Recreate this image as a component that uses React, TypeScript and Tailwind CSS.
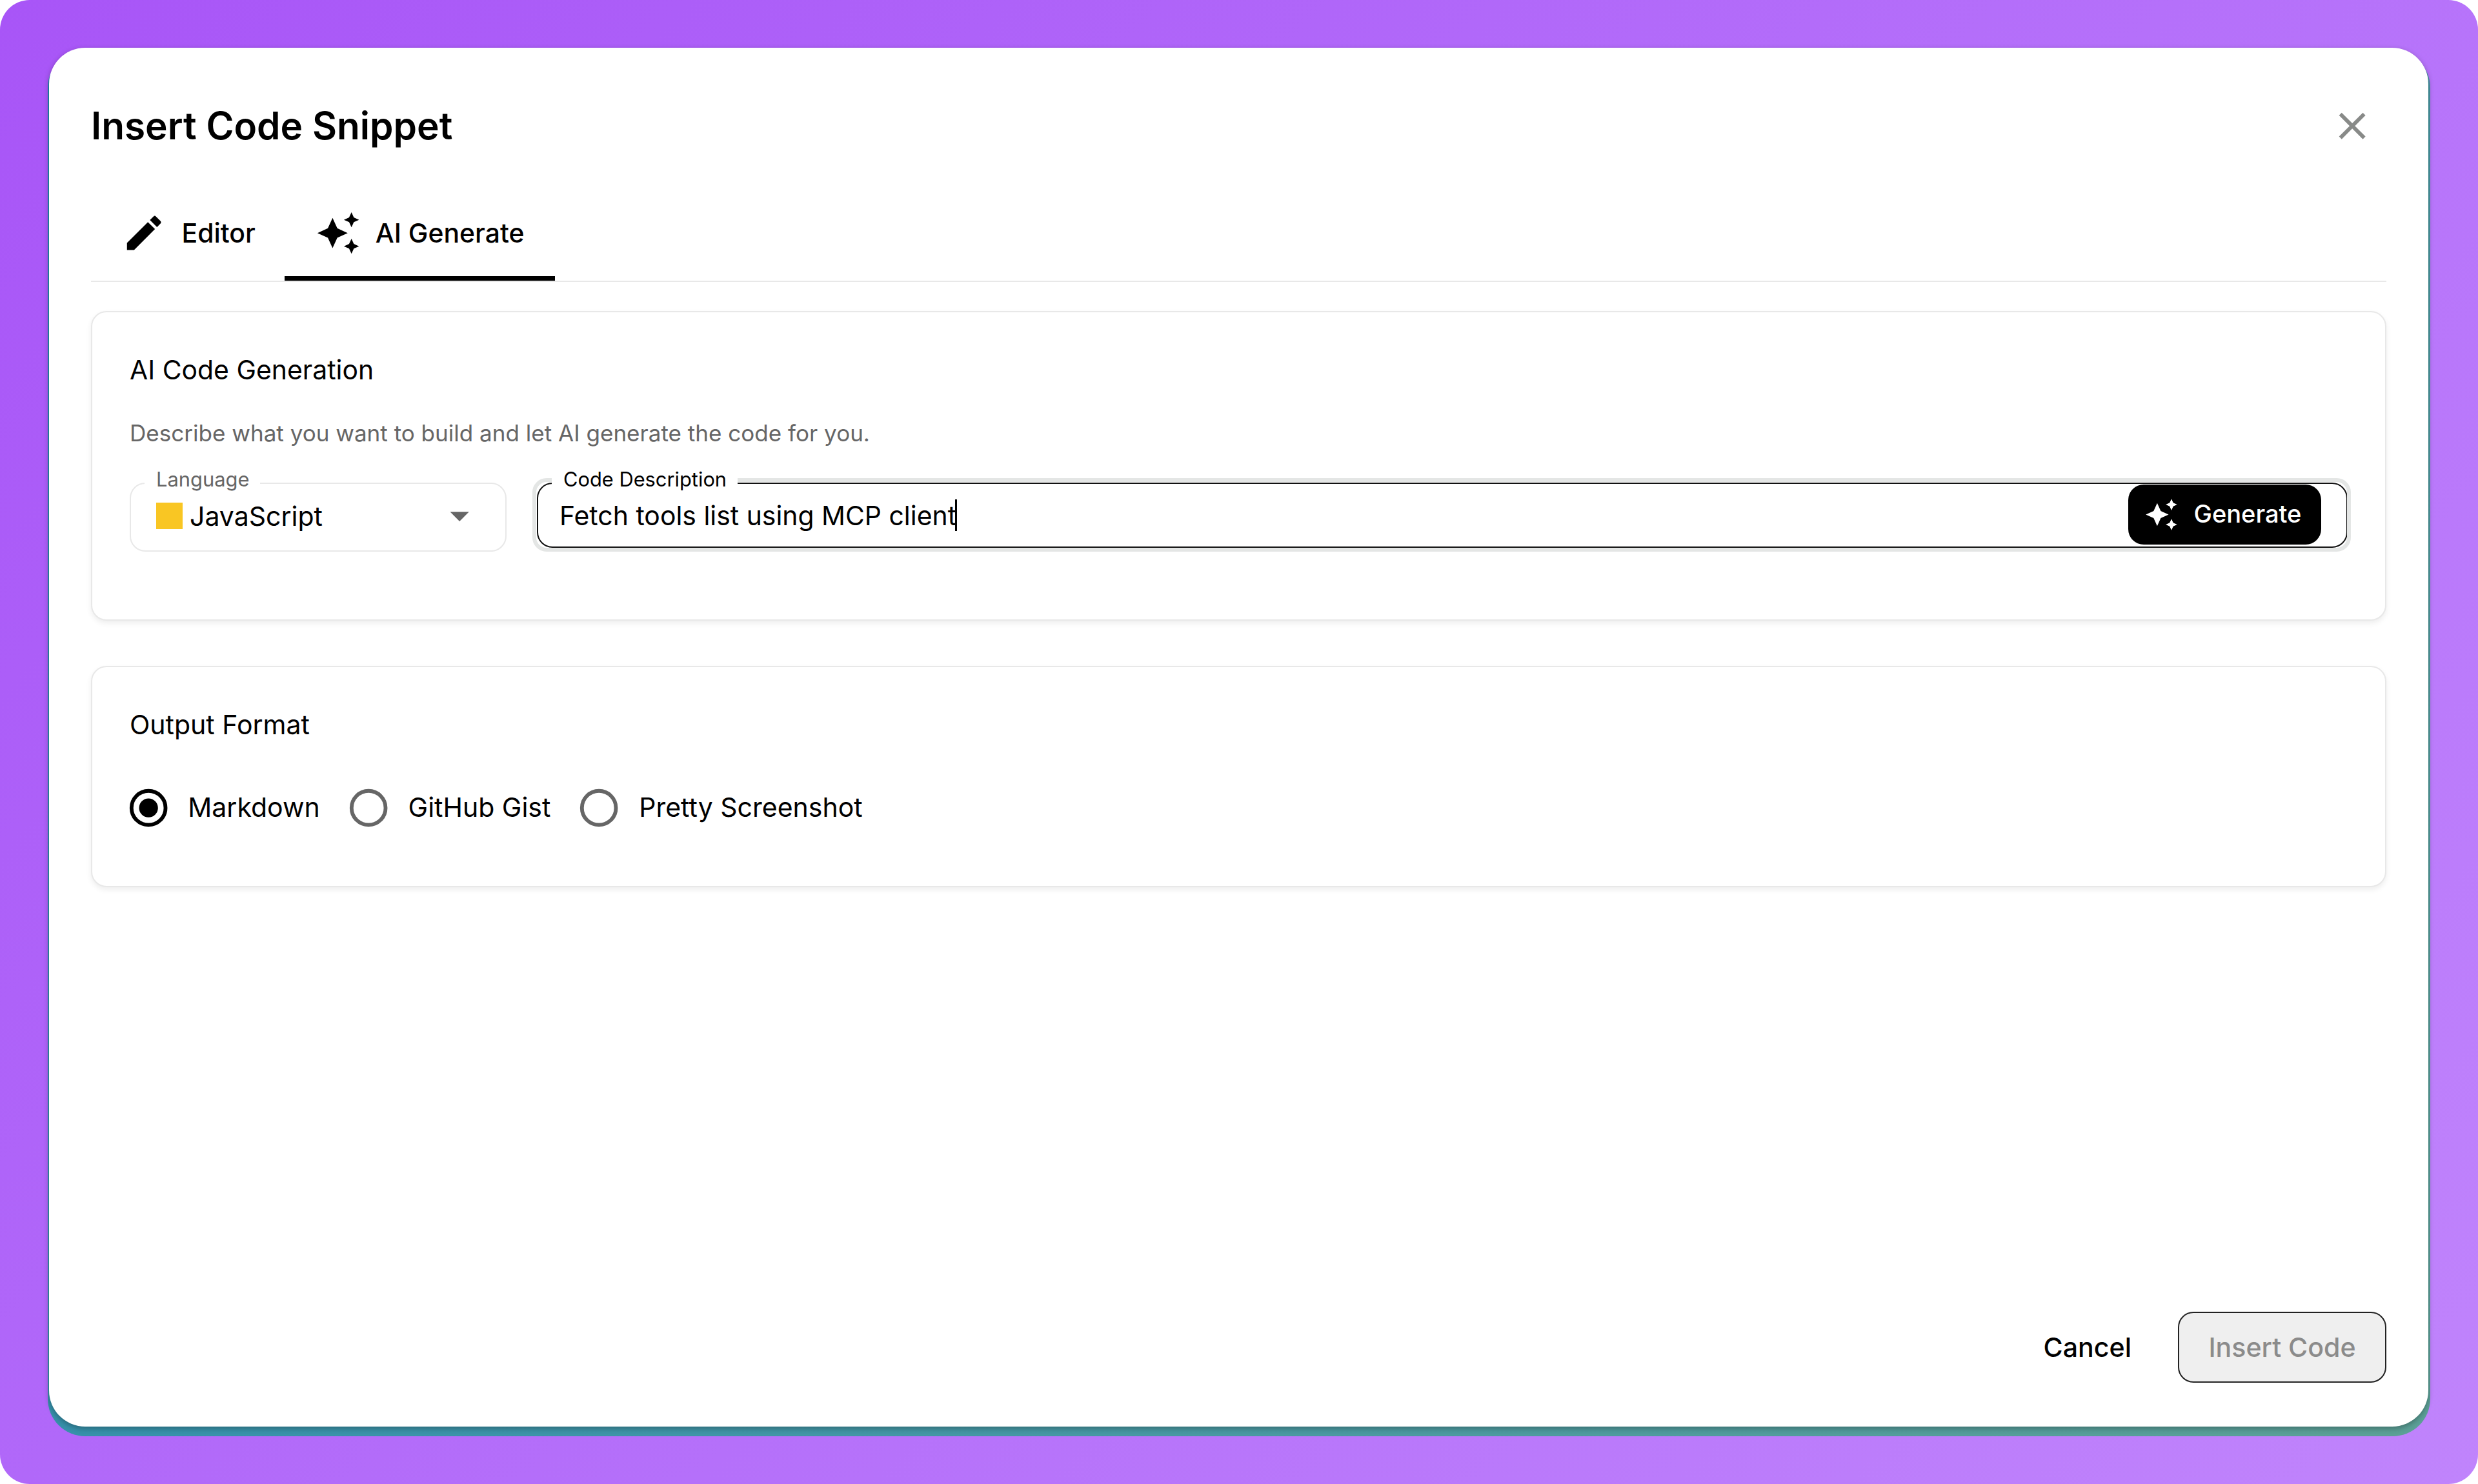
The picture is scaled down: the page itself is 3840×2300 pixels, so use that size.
import type { ReactNode } from "react";

const PATHS = {
  edit: "M3 17.25V21h3.75L17.81 9.94l-3.75-3.75zM20.71 7.04c.39-.39.39-1.02 0-1.41l-2.34-2.34a.996.996 0 0 0-1.41 0l-1.83 1.83 3.75 3.75z",
  sparkle:
    "m19 9 1.25-2.75L23 5l-2.75-1.25L19 1l-1.25 2.75L15 5l2.75 1.25zm-7.5.5L9 4 6.5 9.5 1 12l5.5 2.5L9 20l2.5-5.5L17 12zM19 15l-1.25 2.75L15 19l2.75 1.25L19 23l1.25-2.75L23 19l-2.75-1.25z",
  close:
    "M19 6.41 17.59 5 12 10.59 6.41 5 5 6.41 10.59 12 5 17.59 6.41 19 12 13.41 17.59 19 19 17.59 13.41 12z",
  arrowDown: "m7 10 5 5 5-5z",
};

function Icon({ name, className }: { name: keyof typeof PATHS; className: string }) {
  return (
    <svg viewBox="0 0 24 24" fill="currentColor" className={`shrink-0 ${className}`}>
      <path d={PATHS[name]} />
    </svg>
  );
}

function Card({ className, children }: { className: string; children: ReactNode }) {
  return (
    <section
      className={`rounded-[24px] border-2 border-[#e8e8e8] bg-white pr-[58.5px] pl-[58px] shadow-[0_4px_9px_rgba(0,0,0,0.07)] ${className}`}
    >
      {children}
    </section>
  );
}

function Radio({ label, checked }: { label: string; checked?: boolean }) {
  return (
    <label className="flex items-center">
      <svg
        viewBox="0 0 24 24"
        className={`size-[70.3px] shrink-0 ${checked ? "text-black" : "text-[#666666]"}`}
      >
        <circle cx="12" cy="12" r="9" fill="none" stroke="currentColor" strokeWidth="2" />
        {checked && <circle cx="12" cy="12" r="5" fill="currentColor" />}
      </svg>
      <span className="mb-[2px] ml-[26.5px] text-[41px] leading-[62px]">{label}</span>
    </label>
  );
}

export default function App() {
  return (
    <div className="h-[2300px] w-[3840px] bg-white font-[Inter,sans-serif] text-black">
      <div className="h-full rounded-[46px] bg-linear-135 from-[#a855f7] to-[#c084fc] pt-[78px] pr-[74px] pl-[74px]">
        <div className="flow-root h-[2148px] rounded-[58px] bg-linear-135 from-[#1f88b2] via-[#3d94a8] to-[#5ca096] pr-[3px] pl-[2px]">
          <main className="-mt-[4px] flex h-[2137px] flex-col rounded-[56px] bg-white px-[65px] shadow-[0_3px_8px_rgba(0,0,0,0.3)]">
            <header className="flex h-[213px] items-center justify-between pt-[29px] pr-[18px]">
              <h1 className="text-[58.5px] leading-[88px] font-semibold">Insert Code Snippet</h1>
              <button className="text-[#888a88]">
                <Icon name="close" className="size-[70.3px]" />
              </button>
            </header>

            <nav className="flex h-[150px] shrink-0 border-b-2 border-[#e8e8e8] text-[40.9px] font-medium">
              <button className="flex w-[300px] items-center justify-center gap-[23px] pt-[1px] pl-[2px]">
                <Icon name="edit" className="size-[70.3px]" />
                Editor
              </button>
              <button className="relative flex w-[419px] items-center justify-center gap-[23px] pt-[1px]">
                <Icon name="sparkle" className="size-[70.3px]" />
                AI Generate
                <span className="absolute inset-x-0 bottom-0 h-[7px] bg-black" />
              </button>
            </nav>

            <Card className="mt-[45px] h-[480px] pt-[58px]">
              <h2 className="text-[40.9px] leading-[62px]">AI Code Generation</h2>
              <p className="mt-[41px] text-[35.06px] leading-[52px] text-[#666666]">
                Describe what you want to build and let AI generate the code for you.
              </p>
              <div className="mt-[51px] flex items-start gap-[47px]">
                <div className="relative flex h-[107px] w-[584px] items-center rounded-[24px] border-2 border-[#e8e8e8] pr-[36px] pb-[4px] pl-[39px]">
                  <span className="absolute -top-[27px] left-[21px] w-[179px] bg-white pl-[18px] text-[30.9px] leading-[40px] text-[#666666]">
                    Language
                  </span>
                  <span className="size-[41px] bg-[#f9c623]" />
                  <span className="ml-[11px] flex-1 text-[41px] leading-[62px]">JavaScript</span>
                  <Icon name="arrowDown" className="size-[70.3px] text-[#666666]" />
                </div>

                <div className="relative flex h-[101px] flex-1 items-center rounded-[24px] border-2 border-[#111111] pr-[39px] pl-[33px]">
                  <span className="absolute -top-[9px] -right-[7px] -bottom-[8px] -left-[9px] rounded-[22px] border-[6px] border-[#e4e6e5]" />
                  <span className="absolute -top-[27px] left-[21px] w-[288px] bg-white pl-[18px] text-[30.8px] leading-[40px]">
                    Code Description
                  </span>
                  <span className="text-[40.9px] leading-[62px]">Fetch tools list using MCP client</span>
                  <span className="-ml-[2px] h-[49px] w-[3px] bg-black" />
                  <button className="mb-[2px] ml-auto flex h-[93px] w-[299px] items-center rounded-[24px] bg-black pl-[25px] text-[38px] font-medium text-white">
                    <Icon name="sparkle" className="size-[53px]" />
                    <span className="mb-[2px] ml-[24px]">Generate</span>
                  </button>
                </div>
              </div>
            </Card>

            <Card className="mt-[70px] h-[343px] pt-[58px]">
              <h2 className="text-[41px] leading-[62px]">Output Format</h2>
              <div className="-ml-[6.5px] mt-[63px] flex items-center gap-[40px]">
                <Radio label="Markdown" checked />
                <Radio label="GitHub Gist" />
                <Radio label="Pretty Screenshot" />
              </div>
            </Card>

            <footer className="mt-auto mb-[68px] flex items-center justify-end text-[41.1px] font-medium">
              <button className="mr-[72px] pt-[1px]">Cancel</button>
              <button className="h-[110px] w-[323px] rounded-[24px] border-2 border-[#222222] bg-[#efefef] pt-[1px] text-[#8b8b8b]">
                Insert Code
              </button>
            </footer>
          </main>
        </div>
      </div>
    </div>
  );
}
